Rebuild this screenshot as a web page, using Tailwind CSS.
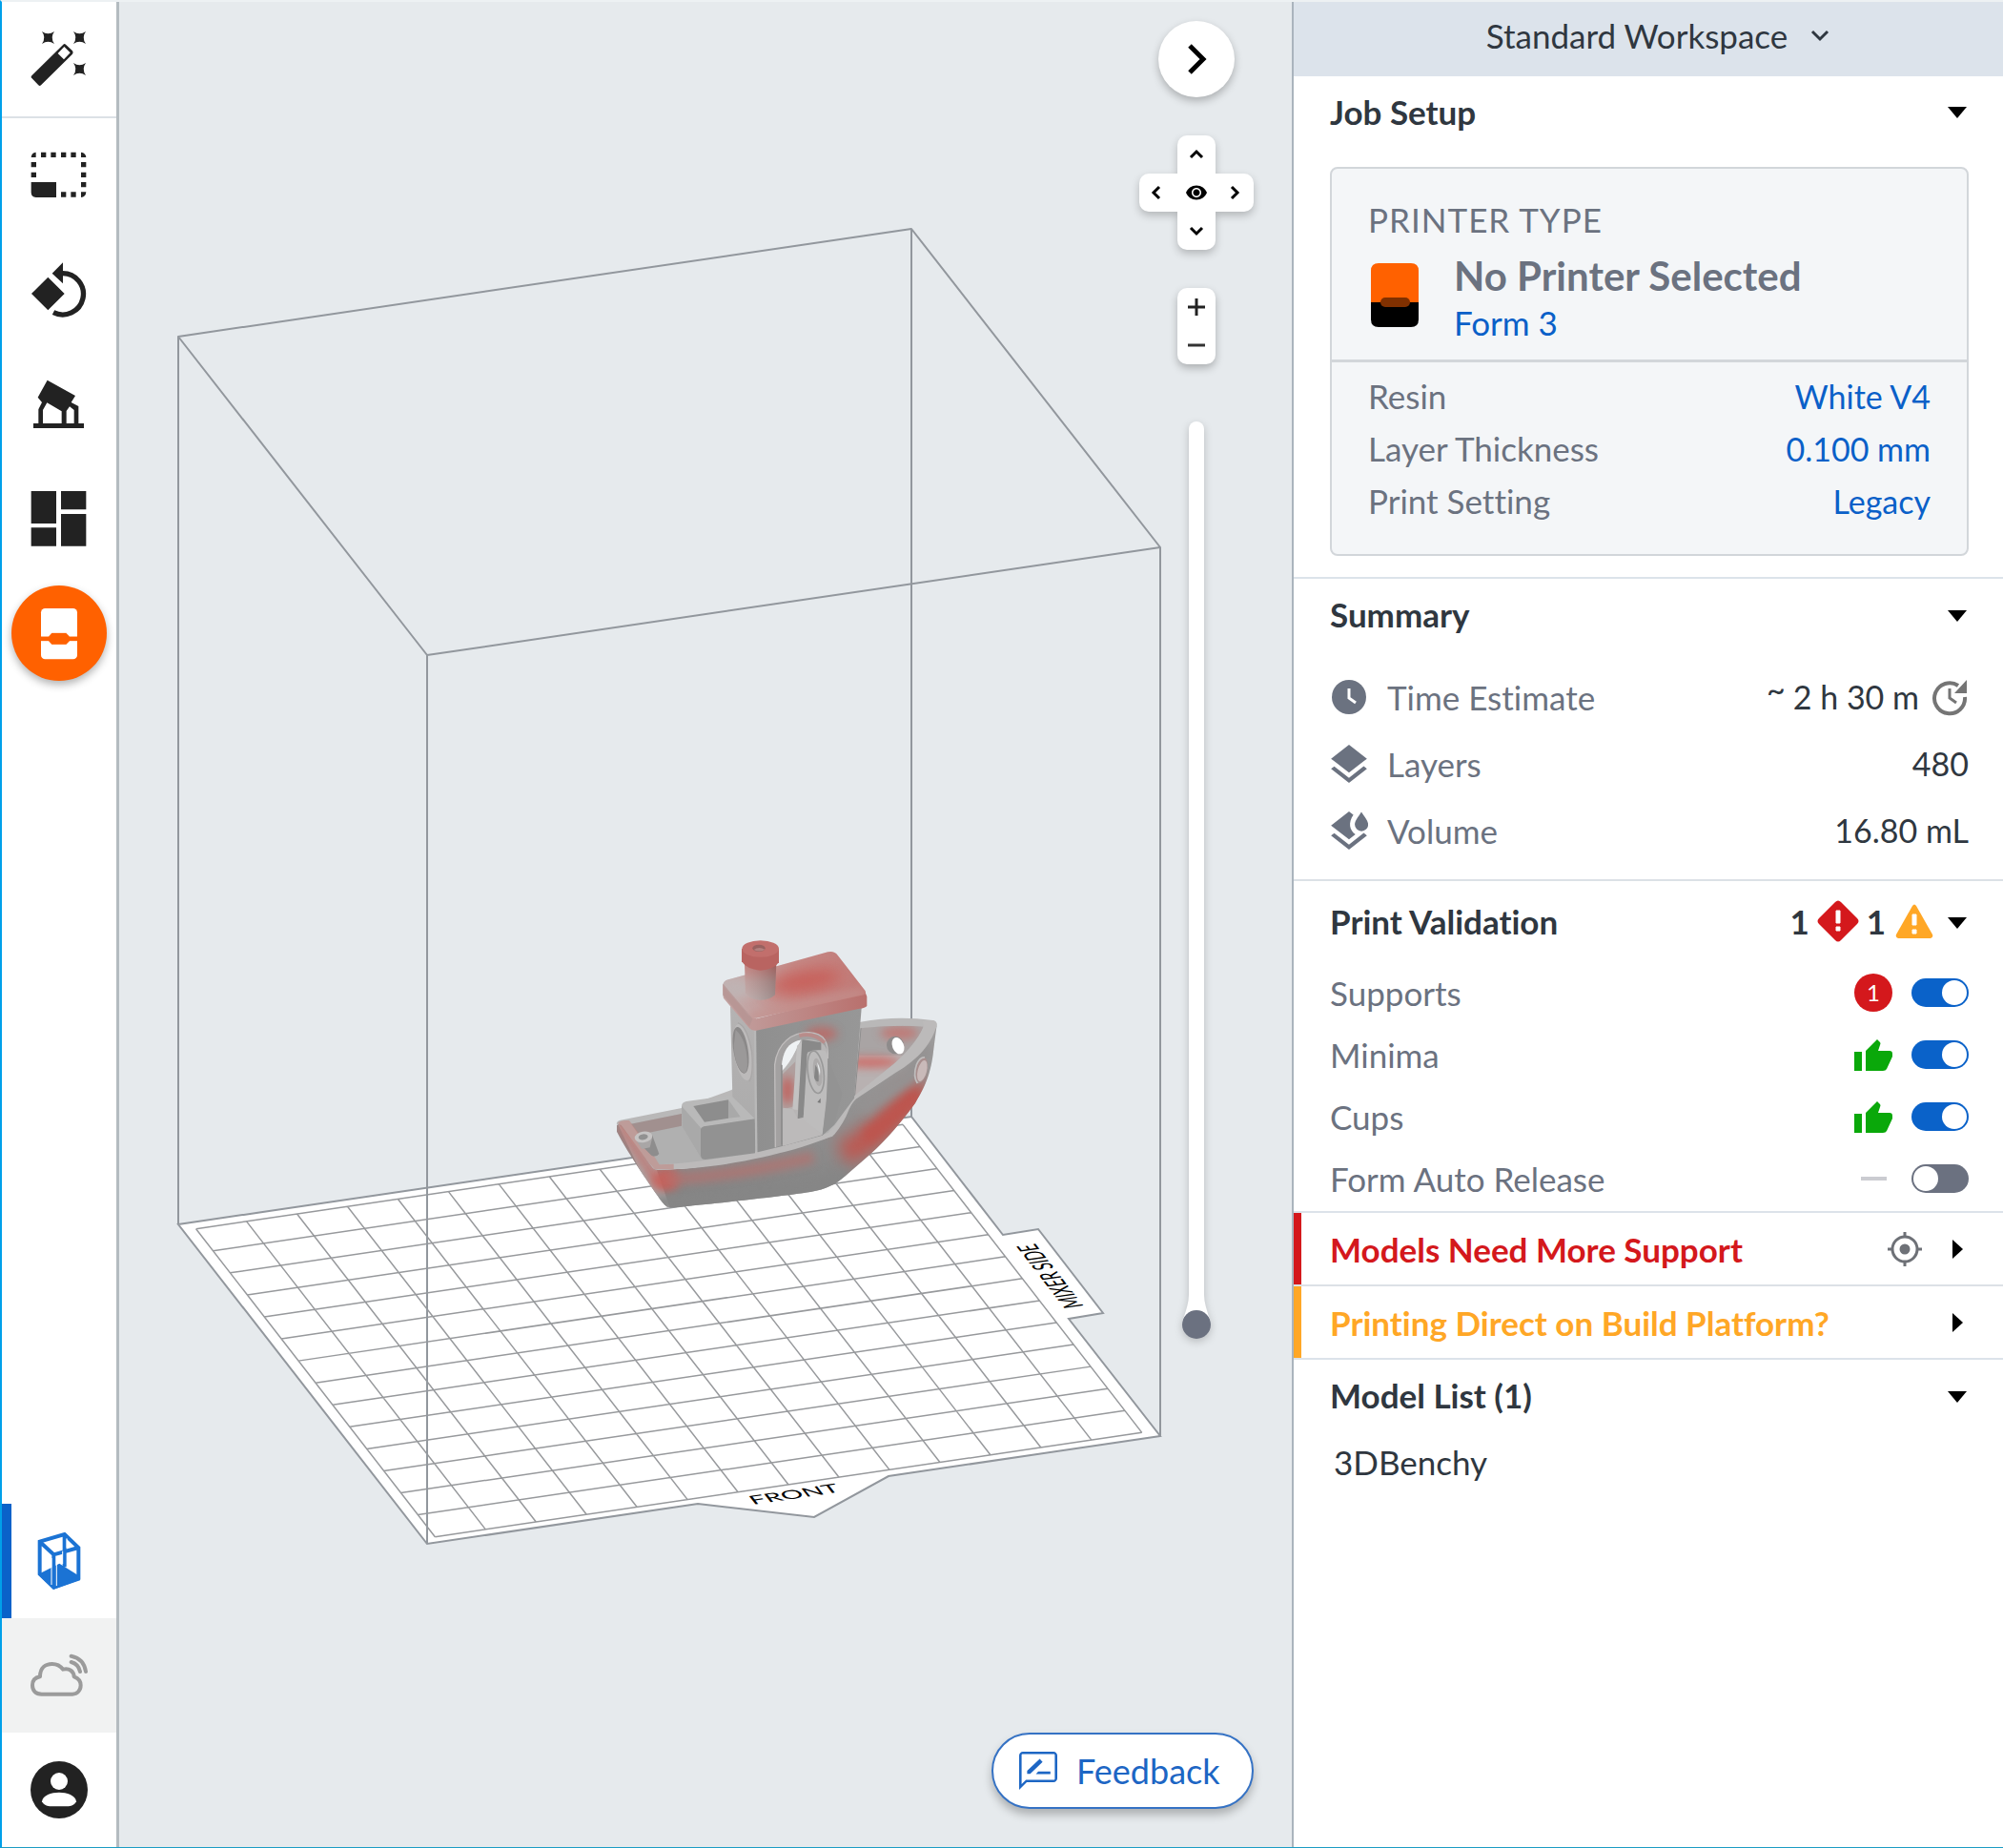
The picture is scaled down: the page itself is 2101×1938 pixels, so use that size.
<!DOCTYPE html>
<html lang="en">
<head>
<meta charset="utf-8">
<meta name="viewport" content="width=device-width, initial-scale=1">
<title>Print preparation</title>
<script src="https://cdn.jsdelivr.net/npm/@tailwindcss/browser@4"></script>
</head>
<body class="bg-white font-['Lato',sans-serif] text-[35px] leading-10 text-[#2f3740] [font-variant-ligatures:no-common-ligatures]">
<div class="flex min-h-screen border-t-2 border-b border-l-2 border-t-[#edf1f3] border-b-[#1c9cc4] border-l-[#00a0e9]">

  <!-- Tool bar -->
  <nav aria-label="Tools" class="flex w-[123px] shrink-0 flex-col border-r-3 border-[#b4bbc0] text-[#222]">
    <button aria-label="One-click print" class="box-content flex h-[120px] items-center justify-center border-b-2 border-[#dce1e6]">
      <svg class="size-[60px]" viewBox="96 96 180 180" fill="currentColor">
        <path fill-rule="evenodd" d="M98 244 Q97 241 100 238 L199 140 Q203 136 207 140 L228 160 Q232 165 228 170 L129 268 Q125 272 121 268Z M182 168 L201 187 L221 166 L202 147Z"/>
        <path d="M132 99Q151 113 171 99Q157 118 171 138Q151 125 132 138Q146 118 132 99ZM231 99Q250 113 270 99Q256 118 270 138Q250 125 231 138Q245 118 231 99ZM231 198Q250 212 270 198Q256 217 270 237Q250 224 231 237Q245 217 231 198Z"/>
      </svg>
    </button>
    <button aria-label="Size" class="flex h-[120px] items-center justify-center">
      <svg class="size-[60px]" viewBox="96 462 180 180" fill="currentColor">
        <path d="M98 573H177V621H113Q98 619 98 605ZM98 495Q99 480 113 479V495ZM255 479Q270 481 271 495H255ZM255 604H271Q270 620 255 621ZM129 479h16v16h-16zM160 479h16v16h-16zM192 479h16v16h-16zM223 479h16v16h-16zM98 510h16v16h-16zM98 542h16v16h-16zM255 510h16v16h-16zM255 542h16v16h-16zM255 573h16v16h-16zM192 604h16v16h-16zM223 604h16v16h-16z"/>
      </svg>
    </button>
    <button aria-label="Orientation" class="flex h-[120px] items-center justify-center">
      <svg class="size-[60px]" viewBox="96 822 180 180" fill="currentColor">
        <path d="M99 924L151 872L203 924L151 976ZM164 860L198 826V892Z"/>
        <path d="M196 860A65 65 0 1 1 168 983" fill="none" stroke="currentColor" stroke-width="16"/>
      </svg>
    </button>
    <button aria-label="Supports" class="flex h-[120px] items-center justify-center">
      <svg class="size-[60px]" viewBox="96 42 180 180" fill="currentColor">
        <path d="M149 56L237 105L224 126L247 138V192H264V207H105V192H121V148L132 126L119 110ZM135 192H194V154L148 127L135 150ZM209 192H233V150L219 139L209 153Z" fill-rule="evenodd"/>
      </svg>
    </button>
    <button aria-label="Layout" class="flex h-[120px] items-center justify-center">
      <svg class="size-[60px]" viewBox="96 402 180 180" fill="currentColor">
        <path d="M98 405h79v102h-79zM98 520h79v58h-79zM192 405h79v58h-79zM192 477h79v101h-79z"/>
      </svg>
    </button>
    <div class="flex h-[120px] items-center justify-center">
      <button aria-label="Upload job" class="flex size-[100px] items-center justify-center rounded-full bg-[#ff6100] shadow-[0_4px_8px_rgba(0,0,0,0.3)]">
        <svg class="size-[60px]" viewBox="96 762 180 180" fill="#fff">
          <rect x="129" y="774" width="114" height="160" rx="13"/>
          <path d="M129 863H153L163 852H208L219 863H243V876H219L208 887H163L153 876H129Z" fill="#ff6100" stroke="#ff6100" stroke-linejoin="round"/>
        </svg>
      </button>
    </div>
    <button aria-label="Workspace view" class="mt-auto flex h-[120px] items-center justify-center border-l-10 border-[#0a62c9] pr-[10px] text-[#1b73d4]">
      <svg class="size-[60px]" viewBox="96 141 180 180">
        <path d="M120 273L187 239L252 280V292L169 320Z" fill="currentColor"/>
        <path d="M125 170L203 147L247 189V285L169 314L125 272ZM125 170L169 211L247 189M169 211V314M203 147V250" fill="none" stroke="currentColor" stroke-width="12"/>
        <path d="M162 222V306M178 216V309M210 160V190M197 200V240" fill="none" stroke="#fff" stroke-width="3"/>
      </svg>
    </button>
    <button aria-label="Remote print" class="flex h-[120px] items-center justify-center bg-[#f1f2f2] text-[#9b9b9b]">
      <svg class="size-[60px]" viewBox="96 501 180 180" fill="none" stroke="currentColor" stroke-width="12" stroke-linecap="round">
        <path d="M126 595C126 566 144 555 164 555C180 555 190 561 198 572C218 567 232 578 233 595C247 600 254 609 254 622C254 638 243 650 228 650H131C112 650 102 638 102 622C102 608 110 598 126 595Z" stroke-linejoin="round"/>
        <path d="M224 549Q247 555 252 579M224 530Q264 538 270 579"/>
      </svg>
    </button>
    <button aria-label="Account" class="flex h-[120px] items-center justify-center">
      <svg class="size-[60px]" viewBox="96 861 180 180">
        <circle cx="186" cy="951" r="90" fill="currentColor"/>
        <circle cx="186" cy="924" r="27" fill="#fff"/>
        <path d="M132 988C134 968 162 959 186 959S238 968 240 988C234 1000 222 1003 212 1003H160C150 1003 138 1000 132 988Z" fill="#fff"/>
      </svg>
    </button>
  </nav>

  <!-- 3D view -->
  <main class="relative min-w-0 flex-1 bg-[#e6eaed]">
    <svg class="absolute inset-0 h-full w-full" viewBox="125 2 1230 1935" role="img" aria-label="Build volume with the 3DBenchy model">
      <defs>
        <filter id="soft" filterUnits="userSpaceOnUse" x="-100" y="-100" width="1400" height="1200" color-interpolation-filters="sRGB"><feGaussianBlur stdDeviation="26"/></filter>
        <filter id="soft2" filterUnits="userSpaceOnUse" x="-100" y="-100" width="1400" height="1200" color-interpolation-filters="sRGB"><feGaussianBlur stdDeviation="15"/></filter>
        <linearGradient id="hull" x1="0" y1="0" x2="0" y2="1"><stop offset="0" stop-color="#a09e9e"/><stop offset="1" stop-color="#838383"/></linearGradient>
        <linearGradient id="left" x1="0" y1="0" x2="0" y2="1"><stop offset="0" stop-color="#b5b3b3"/><stop offset="1" stop-color="#aaa"/></linearGradient>
        <linearGradient id="front" x1="0" y1="0" x2="1" y2="0"><stop offset="0" stop-color="#8f8f8f"/><stop offset="1" stop-color="#979797"/></linearGradient>
        <linearGradient id="roof" x1="0" y1="0" x2="1" y2="0"><stop offset="0" stop-color="#c3b2b2"/><stop offset=".5" stop-color="#c58c89"/><stop offset="1" stop-color="#c27a77"/></linearGradient>
        <linearGradient id="eave" x1="0" y1="0" x2="1" y2="0"><stop offset="0" stop-color="#c2a3a2"/><stop offset="1" stop-color="#b9706d"/></linearGradient>
        <linearGradient id="stack" x1="0" y1="0" x2="0" y2="1"><stop offset="0" stop-color="#bd6e6b"/><stop offset=".5" stop-color="#b79391"/><stop offset="1" stop-color="#b9a6a5"/></linearGradient>
        <linearGradient id="shade" x1="0" y1="0" x2="1" y2="0"><stop offset="0" stop-color="#fff" stop-opacity=".12"/><stop offset="1" stop-color="#000" stop-opacity=".16"/></linearGradient>
        <clipPath id="hullClip"><path d="M81 660L95 655L200 800C350 800 520 768 760 695L830 575C950 505 1040 440 1088 345L1078 420C1070 500 1050 540 1020 590C980 645 930 705 880 750L800 820C770 846 740 862 690 870C600 884 400 905 300 915C240 922 240 921 225 903C190 855 120 755 81 680Z"/></clipPath>
        <clipPath id="bowClip"><path d="M848 355Q950 343 1046 350C1030 400 990 440 940 478L828 570Z"/></clipPath>
        <clipPath id="roofClip"><path d="M415 222Q415 205 432 202L745 115Q765 110 776 125L862 236Q867 245 858 250L520 323Q505 326 496 314Z"/></clipPath>
        <clipPath id="cabinClip"><path d="M518 350L852 280L828 575L728 692L525 745Z"/></clipPath>
        <clipPath id="doorClip"><path d="M603 725L600 470C606 412 632 394 672 390C718 388 744 405 745 440L740 600L728 690Z"/></clipPath>
      </defs>

      <path d="M187 1284L956 1171L1052 1295L1089 1289L1157 1377L1121 1383L1217 1506L932 1548L854 1591L732 1577L448 1619Z" fill="#fff" stroke="#92979d" stroke-width="2"/>
      <path transform="matrix(52.96 -7.81 17.91 23.07 205.6 1288.7)" vector-effect="non-scaling-stroke" fill="none" stroke="#97999c" stroke-width="1.5"
        d="M0 0h14M0 1h14M0 2h14M0 3h14M0 4h14M0 5h14M0 6h14M0 7h14M0 8h14M0 9h14M0 10h14M0 11h14M0 12h14M0 13h14M0 14h14M0 0v14M1 0v14M2 0v14M3 0v14M4 0v14M5 0v14M6 0v14M7 0v14M8 0v14M9 0v14M10 0v14M11 0v14M12 0v14M13 0v14M14 0v14"/>
      <g font-size="28" fill="#000">
        <text transform="matrix(.989 -.146 .335 .431 790 1578)">FRONT</text>
        <text transform="matrix(-.335 -.431 .989 -.146 1137 1370)">MIXER SIDE</text>
      </g>
      <path d="M956 240V1172" stroke="#92979d" stroke-width="2"/>

      <!-- 3DBenchy -->
      <g transform="translate(620 960) scale(.33333)">
        <path d="M80 655Q82 645 100 643L285 606L440 550L848 335Q960 315 1075 330Q1090 333 1088 345L1040 440L830 590L760 700L520 770L200 805Z" fill="#b9b8b8"/>
        <path d="M118 658L285 624L445 570L830 560L745 685L640 716Q520 745 350 778L215 787Z" fill="#b0b0b0"/>
        <path d="M118 658L285 624V662L150 690Z" fill="#a1908f"/>
        <g clip-path="url(#bowClip)">
          <path d="M800 330H1060V600H800Z" fill="#b8b1b1"/>
          <path d="M800 330H1060L1000 440H800Z" fill="#a9a4a4"/>
          <ellipse cx="970" cy="370" rx="60" ry="22" fill="#c4716d" opacity=".8" filter="url(#soft2)"/>
          <ellipse cx="880" cy="462" rx="90" ry="16" fill="#d0645f" opacity=".9" filter="url(#soft2)"/>
          <path d="M848 350L828 570" stroke="#8d8d8d" stroke-width="6"/>
        </g>
        <ellipse cx="957" cy="408" rx="27" ry="28" fill="#8e8b8b"/>
        <ellipse cx="966" cy="410" rx="18" ry="27" transform="rotate(-22 966 410)" fill="#fff"/>

        <!-- hull -->
        <path d="M81 660L95 655L200 800C350 800 520 768 760 695L830 575C950 505 1040 440 1088 345L1078 420C1070 500 1050 540 1020 590C980 645 930 705 880 750L800 820C770 846 740 862 690 870C600 884 400 905 300 915C240 922 240 921 225 903C190 855 120 755 81 680Z" fill="url(#hull)"/>
        <g clip-path="url(#hullClip)">
          <path d="M81 650L205 795L250 925L200 900Z" fill="#aaa"/>
          <path d="M90 660L215 850" stroke="#c46f6b" stroke-width="30" opacity=".8" filter="url(#soft2)"/>
          <ellipse cx="235" cy="832" rx="42" ry="40" fill="#c9605a" opacity=".9" filter="url(#soft2)"/>
          <path d="M240 830Q450 820 700 760" fill="none" stroke="#b5716e" stroke-width="36" opacity=".75" filter="url(#soft2)"/>
          <path d="M790 750Q880 710 940 640T1050 540" fill="none" stroke="#bd5851" stroke-width="80" filter="url(#soft)"/>
          <path d="M860 700Q950 640 1030 560" fill="none" stroke="#bd554e" stroke-width="44" filter="url(#soft2)"/>
          <path d="M850 610L1000 510L1060 410" fill="none" stroke="#949292" stroke-width="44" filter="url(#soft2)"/>
          <path d="M200 905Q500 890 690 862L800 815" fill="none" stroke="#868686" stroke-width="44" filter="url(#soft2)"/>
        </g>
        <!-- rail -->
        <path d="M81 655Q88 643 118 645L150 690L215 784Q350 778 520 742L640 714L745 685Q770 670 785 630L825 570L940 478Q1020 410 1046 350L1044 333L1075 330Q1090 334 1087 350C1060 430 1000 470 950 500L835 577Q822 588 812 610Q795 655 765 690Q740 705 640 736C520 768 400 795 210 801L195 796L95 660Z" fill="#bcbaba"/>
        <path d="M85 652Q95 643 120 645L165 705L215 784L260 782V799L200 799L90 668Z" fill="#c08884" opacity=".6"/>
        <ellipse cx="1038" cy="488" rx="19" ry="42" transform="rotate(14 1038 488)" fill="#a88f8e"/>
        <ellipse cx="1042" cy="489" rx="14" ry="34" transform="rotate(14 1042 489)" fill="#c9bab9"/>
        <path d="M1027 528Q1012 505 1024 470Q1035 445 1050 447" fill="none" stroke="#bfbdbd" stroke-width="5"/>

        <!-- mooring post -->
        <path d="M140 705L192 690L214 750Q205 762 190 755Z" fill="#8e8d8d"/>
        <path d="M137 700L160 735L185 730L193 698Z" fill="#a9a6a6"/>
        <ellipse cx="165" cy="697" rx="28" ry="17" transform="rotate(-10 165 697)" fill="#c6c4c4"/>
        <ellipse cx="164" cy="697" rx="15" ry="9" transform="rotate(-10 164 697)" fill="#919191"/>

        <!-- cargo box -->
        <path d="M285 600Q285 588 300 585L440 566L520 640L515 750L360 768L345 762L287 665Z" fill="#b9b9b9"/>
        <path d="M285 600L345 668V762L287 665Z" fill="#a9a9a9"/>
        <path d="M345 672Q348 664 360 663L516 640V748L360 768Q345 768 345 755Z" fill="#929292"/>
        <path d="M322 600L432 580V638L357 650Z" fill="#8d8d8d"/>
        <path d="M432 580V638L470 634Z" fill="#a9a9a9"/>

        <!-- cabin -->
        <path d="M438 285L522 350L525 745L515 640L445 570Z" fill="url(#left)"/>
        <path d="M518 350L852 280L828 575L765 660L728 692L605 725L525 745L515 742Z" fill="url(#front)"/>
        <g clip-path="url(#cabinClip)">
          <ellipse cx="725" cy="372" rx="50" ry="22" fill="#c4625e" opacity=".75" filter="url(#soft2)"/>
        </g>
        <path d="M516 360L520 744" stroke="#b8b8b8" stroke-width="7"/>
        <ellipse cx="478" cy="430" rx="29" ry="90" transform="rotate(-9 478 430)" fill="#bcbaba"/>
        <ellipse cx="471" cy="424" rx="23" ry="74" transform="rotate(-9 471 424)" fill="#8b8989"/>
        <path d="M455 360Q490 390 492 470Q490 495 482 496Q452 480 449 410Z" fill="#9b9999"/>
        <path d="M462 338Q492 350 506 430Q512 500 497 523" fill="none" stroke="#a9a7a7" stroke-width="4"/>

        <path d="M580 730L578 470C586 398 635 368 685 368C735 370 748 400 746 440L740 600L728 690L603 722Z" fill="#a3a1a1"/>
        <path d="M580 730L578 470C586 398 635 368 685 368C735 370 748 400 745 450" fill="none" stroke="#c1bebe" stroke-width="4"/>
        <path d="M655 378Q700 366 735 400" fill="none" stroke="#c77f7c" stroke-width="12" opacity=".6"/>
        <g clip-path="url(#doorClip)">
          <path d="M590 380H760V730H590Z" fill="#b8b6b6"/>
          <path d="M590 380H666L644 425Q625 465 600 490Z" fill="#eff2f4"/>
          <path d="M602 492Q626 470 645 425L664 392L668 430L650 640H604V505Z" fill="#b8b6b6"/>
          <path d="M602 500L643 460L642 600L604 610Z" fill="#b0a09f"/>
          <ellipse cx="618" cy="550" rx="18" ry="44" fill="#c0625e" filter="url(#soft2)"/>
          <path d="M648 410L664 396L660 500L650 612L634 610Z" fill="#c3c2c2"/>
          <path d="M664 390L724 400V424L688 430L668 636L650 640Z" fill="#898989"/>
          <path d="M604 605L635 610L650 640L668 637L728 692L603 728Z" fill="#bcbaba"/>
          <path d="M680 435Q690 420 735 425L746 440L741 560L728 690L668 642Z" fill="#bdbcbc"/>
          <ellipse cx="707" cy="493" rx="25" ry="67" transform="rotate(-7 707 493)" fill="none" stroke="#999" stroke-width="5"/>
          <ellipse cx="713" cy="493" rx="14" ry="44" transform="rotate(-7 713 493)" fill="#adabab"/>
          <path d="M706 470Q718 485 716 522Q708 526 702 510Z" fill="#858585"/>
          <path d="M711 462Q724 480 720 505Z" fill="#e8ebed"/>
          <path d="M712 588L722 575V590Z" fill="#777"/>
        </g>
        <path d="M745 450L748 520L728 690L765 655L790 560Z" fill="#939393"/>
        <path d="M600 470V722" stroke="#858585" stroke-width="4"/>

        <!-- roof -->
        <path d="M415 215L496 314L520 325L862 240L868 255V285Q862 292 845 293L520 362Q505 364 498 355L418 262Q413 255 415 215Z" fill="url(#eave)"/>
        <path d="M415 222Q415 205 432 202L745 115Q765 110 776 125L862 236Q867 245 858 250L520 323Q505 326 496 314Z" fill="url(#roof)"/>
        <g clip-path="url(#roofClip)">
          <ellipse cx="670" cy="208" rx="120" ry="34" fill="#c85953" opacity=".9" filter="url(#soft)" transform="rotate(-10 670 208)"/>
          <ellipse cx="460" cy="230" rx="50" ry="30" fill="#bfb3b3" filter="url(#soft2)"/>
          <path d="M500 322L700 275L860 240" stroke="#c3928f" stroke-width="20" fill="none" filter="url(#soft2)"/>
        </g>
        <path d="M415 215V250L498 350L508 325Z" fill="#b39392" opacity=".7"/>

        <!-- chimney -->
        <path d="M483 150H583L579 250Q560 268 530 266Q500 264 486 245Z" fill="url(#stack)"/>
        <path d="M483 150H583L579 250Q560 268 530 266Q500 264 486 245Z" fill="url(#shade)"/>
        <path d="M474 105V145Q490 170 533 173Q575 170 591 148V105Z" fill="#b96461"/>
        <ellipse cx="533" cy="105" rx="58" ry="26" fill="#c26f6c"/>
        <ellipse cx="528" cy="103" rx="20" ry="11" fill="#98615f"/>
        <path d="M512 108Q528 96 547 107Q530 118 512 108Z" fill="#b3807e"/>
      </g>

      <path d="M187 1284V353L956 240L1217 574V1506M187 353L448 687L1217 574M448 687V1619" fill="none" stroke="#92979d" stroke-width="2" stroke-linejoin="round"/>
    </svg>

    <!-- View controls over the canvas -->
    <div class="absolute top-5 right-10 flex w-[120px] flex-col items-center text-black">
      <button aria-label="Collapse panel" class="flex size-20 items-center justify-center rounded-full bg-white shadow-[0_4px_8px_rgba(0,0,0,0.25)]">
        <svg class="size-8" viewBox="0 0 32 32" fill="none" stroke="currentColor" stroke-width="5"><path d="M9 2L23 16L9 30"/></svg>
      </button>
      <div class="mt-10 grid grid-cols-3 drop-shadow-[0_4px_4px_rgba(0,0,0,0.22)]">
        <button aria-label="View up" class="col-start-2 flex size-10 items-center justify-center rounded-t-[10px] bg-white">
          <svg class="size-4" viewBox="0 0 16 16" fill="none" stroke="currentColor" stroke-width="3"><path d="M2 11L8 5L14 11"/></svg>
        </button>
        <button aria-label="View left" class="col-start-1 flex size-10 items-center justify-center rounded-l-[10px] bg-white">
          <svg class="size-4" viewBox="0 0 16 16" fill="none" stroke="currentColor" stroke-width="3"><path d="M9 2L3 8L9 14"/></svg>
        </button>
        <button aria-label="Reset view" class="flex size-10 items-center justify-center bg-white">
          <svg class="size-6" viewBox="0 0 24 24" fill="currentColor"><path fill-rule="evenodd" d="M12 4.500C7 4.500 2.730 7.610 1 12c1.730 4.390 6 7.500 11 7.500s9.270-3.110 11-7.500c-1.730-4.390-6-7.500-11-7.500zM12 17c-2.760 0-5-2.240-5-5s2.240-5 5-5 5 2.240 5 5-2.240 5-5 5zm0-8.500c-1.930 0-3.500 1.570-3.500 3.500s1.570 3.500 3.500 3.500 3.500-1.570 3.500-3.500-1.570-3.500-3.500-3.500z"/></svg>
        </button>
        <button aria-label="View right" class="flex size-10 items-center justify-center rounded-r-[10px] bg-white">
          <svg class="size-4" viewBox="0 0 16 16" fill="none" stroke="currentColor" stroke-width="3"><path d="M5 2L11 8L5 14"/></svg>
        </button>
        <button aria-label="View down" class="col-start-2 flex size-10 items-center justify-center rounded-b-[10px] bg-white">
          <svg class="size-4" viewBox="0 0 16 16" fill="none" stroke="currentColor" stroke-width="3"><path d="M2 5L8 11L14 5"/></svg>
        </button>
      </div>
      <div class="mt-10 flex flex-col rounded-[10px] bg-white shadow-[0_4px_8px_rgba(0,0,0,0.25)]">
        <button aria-label="Zoom in" class="flex size-10 items-center justify-center">
          <svg class="size-5" viewBox="0 0 20 20" fill="none" stroke="#222" stroke-width="3"><path d="M1 10H19M10 1V19"/></svg>
        </button>
        <button aria-label="Zoom out" class="flex size-10 items-center justify-center">
          <svg class="size-5" viewBox="0 0 20 20" fill="none" stroke="#333" stroke-width="3"><path d="M1 10H19"/></svg>
        </button>
      </div>
      <div class="mt-[60px] flex flex-col items-center drop-shadow-[0_3px_4px_rgba(0,0,0,0.2)]">
        <div class="h-[916px] w-4 rounded-t-full bg-white"></div>
        <div class="relative h-[46px] w-[30px]">
          <svg class="h-[46px] w-[30px]" viewBox="0 0 30 46"><path d="M7 0H23Q23 10 30 28Q28 45 15 45Q2 45 0 28Q7 10 7 0Z" fill="#fff"/></svg>
          <input type="range" min="0" max="480" value="0" aria-label="Layer" class="absolute bottom-0 left-0 h-[962px] w-[30px] appearance-none bg-transparent [direction:rtl] [writing-mode:vertical-lr] [&::-webkit-slider-thumb]:size-[30px] [&::-webkit-slider-thumb]:appearance-none [&::-webkit-slider-thumb]:rounded-full [&::-webkit-slider-thumb]:bg-[#6b7180]">
        </div>
      </div>
    </div>

    <button class="absolute right-10 bottom-10 flex h-20 w-[275px] items-center gap-4 rounded-full border-2 border-[#3572c4] bg-white pl-[23px] text-[36px] text-[#1d66c4] shadow-[0_6px_10px_rgba(0,0,0,0.25)]">
      <svg class="size-12" viewBox="0 0 24 24" fill="currentColor"><path d="M20 2H4c-1.100 0-2 .9-2 2v18l4-4h14c1.100 0 2-.9 2-2V4c0-1.100-.9-2-2-2zm.7 14.200c0 .3-.2.500-.5.500H5.600L3.300 19V3.800c0-.3.200-.5.500-.5h16.400c.3 0 .5.200.5.500z"/><path d="M6.200 13.600v-1.600l6.600-6.200 1.500 1.600-6.500 6.200zM12 12.400h6.400v1.300H10.800z"/></svg>
      Feedback
    </button>
  </main>

  <!-- Job panel -->
  <aside class="flex w-[746px] shrink-0 flex-col border-l-2 border-[#aab4bd]">
    <div class="flex h-[78px] items-center justify-center gap-6 bg-[#dce3eb] pb-2 pl-5">
      <select aria-label="Workspace" class="appearance-none bg-transparent [field-sizing:content]"><option>Standard Workspace</option></select>
      <svg class="size-5" viewBox="0 0 20 20" fill="none" stroke="currentColor" stroke-width="3"><path d="M2 6L10 14L18 6"/></svg>
    </div>

    <section class="border-b-2 border-[#dce3ea] pr-9 pb-[22px] pl-[38px]">
      <h2><button class="flex h-[73px] w-full items-center justify-between pr-[2px] font-bold">Job Setup
        <svg class="mt-[3px] h-3 w-5" viewBox="0 0 20 12" fill="#000"><path d="M0 0H20L10 12Z"/></svg></button></h2>
      <div class="mt-[22px] rounded-lg border-2 border-[#d2d6da] bg-[#f4f6f8] text-[#6b7280]">
        <div class="border-b-3 border-[#d2d6da] px-[38px] pt-[33px] pb-[19px]">
          <p class="tracking-[1px]">PRINTER TYPE</p>
          <div class="mt-[15px] flex gap-9">
            <svg class="mt-[11px] h-[67px] w-[54px]" viewBox="-2 0 54 67">
              <path d="M1 41H51V59Q51 67 43 67H9Q1 67 1 59Z" fill="#000"/>
              <path d="M1 41V8Q1 0 9 0H43Q51 0 51 8V41Z" fill="#ff6100"/>
              <rect x="11" y="36" width="31" height="10" rx="5" fill="#803000"/>
            </svg>
            <div>
              <p class="text-[42px] leading-12 font-bold">No Printer Selected</p>
              <a href="#" class="mt-[5px] block text-[#0a60c8]">Form 3</a>
            </div>
          </div>
        </div>
        <dl class="grid grid-cols-[1fr_auto] px-[38px] pt-2 pb-7 leading-[55px]">
          <dt>Resin</dt><dd class="text-right text-[34px]"><a href="#" class="text-[#0a60c8]">White V4</a></dd>
          <dt>Layer Thickness</dt><dd class="text-right text-[34px]"><a href="#" class="text-[#0a60c8]">0.100 mm</a></dd>
          <dt>Print Setting</dt><dd class="text-right text-[34px]"><a href="#" class="text-[#0a60c8]">Legacy</a></dd>
        </dl>
      </div>
    </section>

    <section class="border-b-2 border-[#dce1e6] pr-9 pb-4 pl-[38px]">
      <h2><button class="flex h-[74px] w-full items-center justify-between pr-[2px] font-bold">Summary
        <svg class="mt-[3px] h-3 w-5" viewBox="0 0 20 12" fill="#000"><path d="M0 0H20L10 12Z"/></svg></button></h2>
      <dl class="mt-[15px]">
        <div class="flex h-[70px] items-center">
          <dt class="flex flex-1 items-center gap-5 text-[#6b7280]">
            <svg class="size-10" viewBox="0 0 40 40"><circle cx="20" cy="20" r="18" fill="currentColor"/><path d="M20 11V21L27 26" fill="none" stroke="#fff" stroke-width="3"/></svg>
            Time Estimate</dt>
          <dd class="flex items-center gap-3 text-[34px]"><span class="flex gap-2"><span class="-mt-2">~</span>2 h 30 m</span>
            <button aria-label="Recalculate">
              <svg class="block size-10" viewBox="0 0 40 40" fill="none" stroke="#757575" stroke-width="4"><path d="M29 8A16 16 0 1 0 36 20"/><path d="M20 11V21L27 26" stroke-width="3"/><path d="M38 2V16H25Z" fill="#757575" stroke="none"/></svg>
            </button></dd>
        </div>
        <div class="flex h-[70px] items-center">
          <dt class="flex flex-1 items-center gap-5 text-[#6b7280]">
            <svg class="size-10" viewBox="2.500 2 19 19.100" fill="currentColor"><path d="M11.990 18.540l-7.370-5.730L3 14.070l9 7 9-7-1.630-1.270-7.380 5.740zM12 16l7.360-5.730L21 9l-9-7-9 7 1.630 1.270L12 16z"/></svg>
            Layers</dt>
          <dd class="text-[34px]">480</dd>
        </div>
        <div class="flex h-[70px] items-center">
          <dt class="flex flex-1 items-center gap-5 text-[#6b7280]">
            <svg class="size-10" viewBox="2.500 2 19 19.100" fill="currentColor"><path d="M11.990 18.540l-7.370-5.730L3 14.070l9 7 9-7-1.630-1.270-7.380 5.740zM12 2L14.200 3.700C11.500 7.600 12.200 11.400 15.200 13.500L12 16L3 9Z"/><path d="M18.200 2.200C16.500 4.900 14.900 6.600 14.900 8.500A3.350 3.350 0 0 0 21.600 8.500C21.600 6.600 19.900 4.900 18.200 2.200Z"/></svg>
            Volume</dt>
          <dd class="text-[34px]">16.80 mL</dd>
        </div>
      </dl>
    </section>

    <section class="border-b-2 border-[#dce3ea] pr-9 pl-[38px]">
      <h2><button class="flex h-[84px] w-full items-center pr-[2px] font-bold"><span class="flex-1 text-left">Print Validation</span>
        <span class="mr-2">1</span>
        <svg class="mr-2 size-11" viewBox="0 0 44 44"><path d="M19 2Q22-1 25 2L42 19Q45 22 42 25L25 42Q22 45 19 42L2 25Q-1 22 2 19Z" fill="#d4181c"/><path d="M20 11H24V24H20ZM20 28H24V32H20Z" fill="#fff" stroke="#fff"/></svg>
        <span class="mr-[10px]">1</span>
        <svg class="mr-[15px] h-9 w-10" viewBox="0 0 40 36"><path d="M18 2Q20-1 22 2L39 32Q40 35 37 36H3Q0 35 1 32Z" fill="#ffa726"/><path d="M18 11H22V22H18ZM18 27H22V31H18Z" fill="#fff" stroke="#fff"/></svg>
        <svg class="mt-[3px] h-3 w-5" viewBox="0 0 20 12" fill="#000"><path d="M0 0H20L10 12Z"/></svg></button></h2>
      <div class="pb-[2px] text-[#6b7280]">
        <div class="flex h-[65px] items-center gap-5">
          <label for="v1" class="flex-1">Supports</label>
          <span class="flex size-10 items-center justify-center rounded-full bg-[#d4181c] text-2xl text-white">1</span>
          <input id="v1" type="checkbox" role="switch" checked class="flex h-[30px] w-[60px] appearance-none items-center rounded-full bg-[#6b7180] p-[2px] before:size-[26px] before:rounded-full before:bg-white checked:justify-end checked:bg-[#0a62c9]">
        </div>
        <div class="flex h-[65px] items-center gap-5">
          <label for="v2" class="flex-1">Minima</label>
          <svg class="size-10" viewBox="0 0 40 40" fill="#0aa80a"><path d="M0 17H8V37H0ZM12 16L24 4L27 7Q28 8 27 10L25 16H37Q40 16 40 19V22L34 35Q33 37 30 37H12Z"/></svg>
          <input id="v2" type="checkbox" role="switch" checked class="flex h-[30px] w-[60px] appearance-none items-center rounded-full bg-[#6b7180] p-[2px] before:size-[26px] before:rounded-full before:bg-white checked:justify-end checked:bg-[#0a62c9]">
        </div>
        <div class="flex h-[65px] items-center gap-5">
          <label for="v3" class="flex-1">Cups</label>
          <svg class="size-10" viewBox="0 0 40 40" fill="#0aa80a"><path d="M0 17H8V37H0ZM12 16L24 4L27 7Q28 8 27 10L25 16H37Q40 16 40 19V22L34 35Q33 37 30 37H12Z"/></svg>
          <input id="v3" type="checkbox" role="switch" checked class="flex h-[30px] w-[60px] appearance-none items-center rounded-full bg-[#6b7180] p-[2px] before:size-[26px] before:rounded-full before:bg-white checked:justify-end checked:bg-[#0a62c9]">
        </div>
        <div class="flex h-[65px] items-center gap-5">
          <label for="v4" class="flex-1">Form Auto Release</label>
          <svg class="size-10" viewBox="0 0 40 40" fill="#cbccd1"><path d="M7 18H34V22H7Z"/></svg>
          <input id="v4" type="checkbox" role="switch" class="flex h-[30px] w-[60px] appearance-none items-center rounded-full bg-[#6b7180] p-[2px] before:size-[26px] before:rounded-full before:bg-white checked:justify-end checked:bg-[#0a62c9]">
        </div>
      </div>
    </section>

    <div class="border-b-2 border-[#dce1e6]">
      <div class="flex h-[75px] items-center border-l-8 border-[#d4181c] pr-[42px] pl-[30px] font-bold text-[#d4181c]">
        <h3 class="flex-1">Models Need More Support</h3>
        <button aria-label="Locate" class="mr-8"><svg class="block size-9" viewBox="0 0 36 36" fill="none" stroke="#6e7177" stroke-width="3"><circle cx="18" cy="18" r="13"/><circle cx="18" cy="18" r="5.500" fill="#6e7177" stroke="none"/><path d="M18 0V6M18 30V36M0 18H6M30 18H36"/></svg></button>
        <button aria-label="Expand"><svg class="block h-5 w-[11px]" viewBox="0 0 11 20" fill="#000"><path d="M0 0L11 10L0 20Z"/></svg></button>
      </div>
    </div>
    <div class="border-b-2 border-[#dce3ea]">
      <div class="flex h-[75px] items-center border-l-8 border-[#ffa726] pr-[42px] pl-[30px] font-bold text-[#ffa726]">
        <h3 class="flex-1">Printing Direct on Build Platform?</h3>
        <button aria-label="Expand"><svg class="block h-5 w-[11px]" viewBox="0 0 11 20" fill="#000"><path d="M0 0L11 10L0 20Z"/></svg></button>
      </div>
    </div>

    <section class="pr-9 pl-[38px]">
      <h2><button class="flex h-[74px] w-full items-center justify-between pr-[2px] font-bold">Model List (1)
        <svg class="mt-[3px] h-3 w-5" viewBox="0 0 20 12" fill="#000"><path d="M0 0H20L10 12Z"/></svg></button></h2>
      <ul><li class="flex h-[66px] items-center pl-1">3DBenchy</li></ul>
    </section>
  </aside>
</div>
</body>
</html>
